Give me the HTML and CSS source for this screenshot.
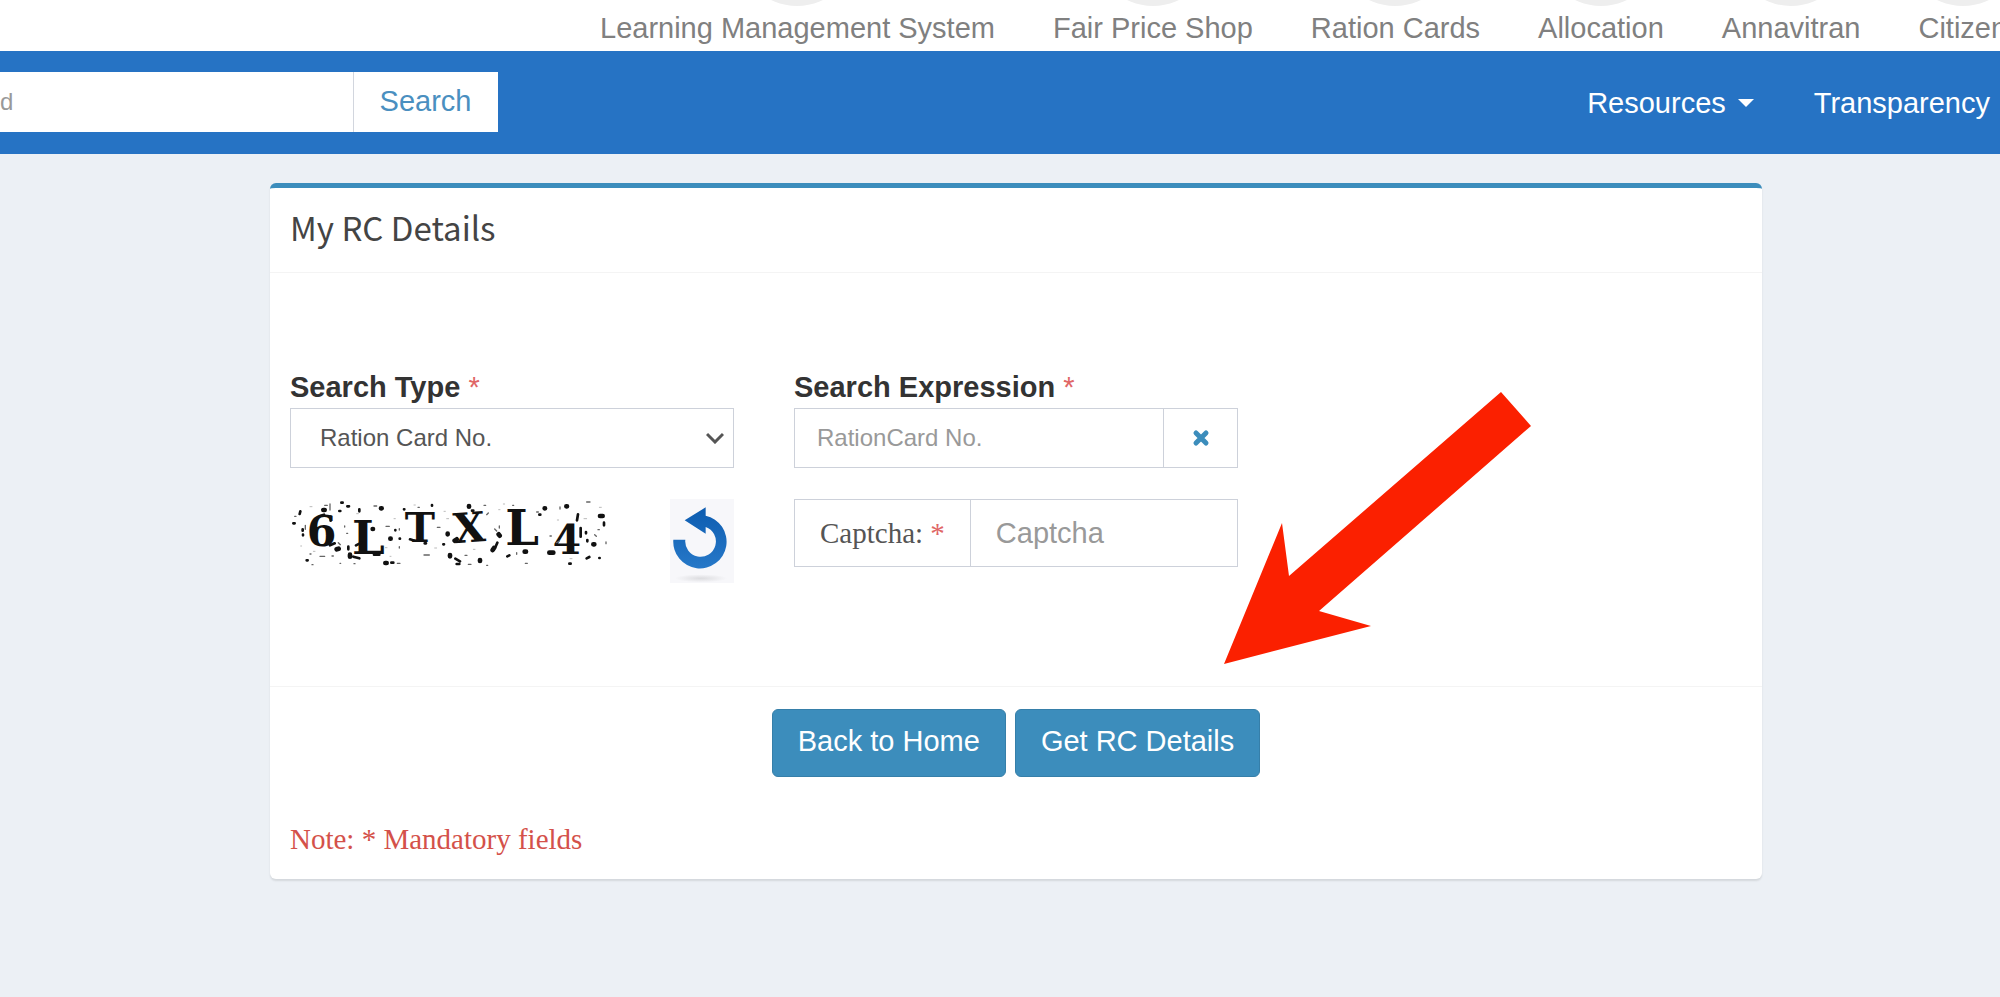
FILE: index.html
```
<!DOCTYPE html>
<html lang="en">
<head>
    <meta charset="UTF-8">
    <meta name="viewport" content="width=device-width, initial-scale=1.0">
    <title>My RC Details</title>
    <link rel="stylesheet" href="styles.css">
</head>
<body>
    <nav class="top-nav">
        <a href="#">Learning Management System</a>
        <a href="#">Fair Price Shop</a>
        <a href="#">Ration Cards</a>
        <a href="#">Allocation</a>
        <a href="#">Annavitran</a>
        <a href="#">Citizen</a>
    </nav>

    <header class="header">
        <form class="site-search">
            <input type="text" placeholder="d" aria-label="Search">
            <button type="button">Search</button>
        </form>
        <nav class="menu">
            <a href="#">Resources <span class="caret"></span></a>
            <a href="#">Transparency</a>
        </nav>
    </header>

    <main class="panel">
        <h1 class="panel-title">My RC Details</h1>

        <form>
            <div class="panel-body">
                <div class="form-group">
                    <label for="searchType">Search Type <span class="required">*</span></label>
                    <div class="select-box">
                        <select id="searchType">
                            <option>Ration Card No.</option>
                        </select>
                        <svg class="chevron" width="18" height="12" viewBox="0 0 18 12" fill="none" stroke="#555" stroke-width="3">
                            <path d="M1 2l8 8 8-8"/>
                        </svg>
                    </div>
                </div>

                <div class="form-group">
                    <label for="expression">Search Expression <span class="required">*</span></label>
                    <div class="input-group">
                        <input type="text" id="expression" placeholder="RationCard No.">
                        <button type="button" class="clear-btn" aria-label="Clear">
                            <svg width="18" height="18" viewBox="0 0 18 18" stroke="#3c8dbc" stroke-width="5" stroke-linecap="round">
                                <path d="M4 4l10 10M14 4L4 14"/>
                            </svg>
                        </button>
                    </div>
                </div>

                <div class="captcha-row">
                    <svg class="captcha" width="320" height="84" viewBox="60 39 960 252">
                        <g class="captcha-text">
                            <text x="110" y="179" font-size="128">6</text>
                            <text x="246" y="205" font-size="140">L</text>
                            <text x="404" y="168" font-size="122">T</text>
                            <text x="550" y="168" font-size="124" transform="rotate(-4 600 130)">X</text>
                            <text x="706" y="178" font-size="144">L</text>
                            <text x="848" y="205" font-size="122">4</text>
                        </g>
                        <!-- noise -->
                        <g fill="none" stroke="#111" stroke-linecap="round">
                            <path stroke-width="14" d="M889 61h2M824 67h1M597 60v2M333 67h2M160 72h4M990 90h8M361 158h1M533 143v2M686 145l3 4M540 207v4M346 231h4M630 222v3M970 175h3M308 129h1M764 197h4M240 206v6M200 190l6-2M668 192l4-6M838 200h12M560 160l-6 4"/>
                            <path stroke-width="8" d="M214 50h4M232 61h5M208 75h3M402 70h1M486 57v2M91 76l-2 8M70 112h4M98 130v4M99 146v2M376 132v1M389 158h1M520 175h2M712 211l6-3M988 216h1M950 217l8-4M898 233h4M110 223h3M235 182v8M556 218l14 8M568 234h-8M268 217l-18-5M924 85l-3 18M952 166v-4M948 142v-4M808 86h3M932 126v26M180 178l14-6M258 178l16-8M420 160l14 4M464 172h4M182 92v12M268 70v6M1002 118v-8M364 230h6M150 90l12-4M312 206h16M676 184l6-14M606 74h4"/>
                            <path stroke-width="4" stroke="#666" d="M180 54v18M164 58h8M150 211h14M462 207h16M642 58h5M950 48h10M870 63v6M74 91h4M186 210h4M205 170l6 6M348 121h10M388 128v4M388 182v4M510 124h-8M585 208h6M595 235h8M688 126v-6M728 58h3M800 78h5M840 150h4M984 131h4M1008 168v5M974 146l5 5M382 232h8M252 233h3M210 232h2M650 238h3M766 232h6M120 204h3M126 236h3M680 135l-6-6M740 205v-5M860 170l8-5M444 64h4M320 60h-8M106 118v12M230 142h3M224 120v3M650 86l5-5"/>
                            <path stroke-width="3" stroke="#bbb" d="M120 62h6M260 83h5M372 98h4M432 57h4M522 76h4M536 98h-6M686 71h4M700 54h4M862 102h4M950 98h-8M988 64h6M346 185h5M494 186h6M610 190h5M360 211h3M900 218h6M92 180h3M130 196h5"/>
                        </g>
                    </svg>
                    <button type="button" class="refresh-btn" aria-label="Refresh captcha">
                        <svg width="64" height="84" viewBox="1193 40 192 252">
                            <defs>
                                <linearGradient id="arrowFill" x1="0" y1="0" x2="0" y2="1">
                                    <stop offset="0" stop-color="#0d5cb0"/>
                                    <stop offset="1" stop-color="#2678c8"/>
                                </linearGradient>
                                <radialGradient id="shadow">
                                    <stop offset="0" stop-color="#dcdcdf"/>
                                    <stop offset="1" stop-color="#f7f7fa"/>
                                </radialGradient>
                            </defs>
                            <ellipse cx="1286" cy="278" rx="78" ry="12" fill="url(#shadow)"/>
                            <path fill="url(#arrowFill)" d="M1237 104L1300 65V90A80 80 0 1 1 1203 162H1239A46 46 0 1 0 1300 124V144Z"/>
                        </svg>
                    </button>
                </div>

                <div class="input-group captcha-group">
                    <label for="captcha">Captcha: <span class="required">*</span></label>
                    <input type="text" id="captcha" placeholder="Captcha">
                </div>
            </div>

            <div class="panel-footer">
                <div class="buttons">
                    <button type="button" class="btn">Back to Home</button>
                    <button type="button" class="btn">Get RC Details</button>
                </div>
                <p class="note">Note: * Mandatory fields</p>
            </div>
        </form>

        <svg class="pointer" width="308" height="273" viewBox="0 0 308 273">
            <path fill="#fb2000" d="M0 272L58 131L65 184L277 0L307 34L95 219L147 234Z"/>
        </svg>
    </main>
</body>
</html>
```
FILE: styles.css
```
* {
    box-sizing: border-box;
    margin: 0;
    padding: 0;
}
body {
    background-color: #ecf0f5;
    color: #333;
    font-family: "Liberation Sans", Arial, sans-serif;
    font-size: 29px;
    line-height: 40px;
    overflow-x: hidden;
}
a {
    text-decoration: none;
}
button, input, select {
    font: inherit;
}
button {
    cursor: pointer;
}

/* Top navigation */
.top-nav {
    display: flex;
    align-items: flex-end;
    gap: 58px;
    height: 51px;
    padding: 0 0 3px 30%;
    background: white;
    overflow: hidden;
}
.top-nav a {
    display: flex;
    flex-direction: column;
    align-items: center;
    flex-shrink: 0;
    color: #808080;
    white-space: nowrap;
}
.top-nav a::before {
    content: "";
    width: 118px;
    height: 118px;
    margin: 0 -20px 2px;
    border-radius: 50%;
    background: #eee;
}

/* Blue header */
.header {
    display: flex;
    justify-content: space-between;
    align-items: center;
    padding: 21px 10px 22px 0;
    background: #2673c4;
}
.site-search {
    display: flex;
    width: 25%;
    height: 60px;
}
.site-search input {
    flex: 1;
    min-width: 0;
    border: none;
    background: white;
    font-size: 24px;
}
.site-search button {
    padding: 0 26px 2px;
    border: none;
    border-left: 1px solid #d2d6de;
    background: white;
    color: #4a8fc0;
}
.menu {
    display: flex;
    gap: 60px;
    padding-top: 2px;
}
.menu a {
    display: flex;
    align-items: center;
    gap: 12px;
    color: white;
}
.caret {
    border-top: 8px solid white;
    border-left: 8px solid transparent;
    border-right: 8px solid transparent;
}

/* Panel */
.panel {
    position: relative;
    margin: 29px 11.9% 40px 13.5%;
    background: white;
    border-top: 5px solid #3c8dbc;
    border-radius: 6px;
    box-shadow: 0 2px 2px rgba(0,0,0,0.1);
}
.panel-title {
    padding: 19px 20px 25px;
    border-bottom: 1px solid #f4f4f4;
    color: #444;
    font-family: "Noto Sans CJK JP", "Noto Sans", sans-serif;
    font-size: 33px;
    font-weight: normal;
    line-height: 40px;
}
.panel-body {
    display: grid;
    grid-template-columns: repeat(3, 1fr);
    gap: 31px 60px;
    padding: 94px 20px 103px;
}
.form-group label {
    display: block;
    margin-bottom: 1px;
    font-weight: bold;
}
.required {
    color: #e06666;
    font-weight: normal;
}
.select-box {
    position: relative;
}
select, input {
    width: 100%;
    height: 60px;
    border: 1px solid #cdd1da;
    border-radius: 0;
    background: white;
    color: #555;
    font-size: 24px;
}
select {
    padding: 0 29px;
    appearance: none;
}
.chevron {
    position: absolute;
    right: 10px;
    top: 24px;
    pointer-events: none;
}
input::placeholder {
    color: #999;
    opacity: 1;
}
.input-group {
    display: flex;
}
.input-group input {
    flex: 1;
    min-width: 0;
    padding: 0 22px;
}
.clear-btn {
    display: flex;
    align-items: center;
    justify-content: center;
    width: 74px;
    border: 1px solid #cdd1da;
    border-left: none;
    background: white;
}
.captcha-row {
    grid-column: 1;
    display: flex;
    justify-content: space-between;
}
.captcha-text {
    font-family: "DejaVu Serif", serif;
    font-weight: bold;
    fill: #111;
}
.refresh-btn {
    height: 84px;
    border: none;
    background: #f7f7fa;
}
.captcha-group label,
.captcha-group input {
    height: 68px;
}
.captcha-group label {
    padding: 13px 25px;
    border: 1px solid #cdd1da;
    border-right: none;
    color: #555;
    font-family: "Liberation Serif", "Times New Roman", serif;
}
.captcha-group input {
    padding: 0 25px;
    font-size: 29px;
}

/* Footer */
.panel-footer {
    padding: 22px 20px 20px;
    border-top: 1px solid #f4f4f4;
}
.buttons {
    display: flex;
    justify-content: center;
    gap: 9px;
    margin-bottom: 42px;
}
.btn {
    padding: 11px 25px 15px;
    border: 1px solid #367fa9;
    border-radius: 6px;
    background: #3c8dbc;
    color: white;
}
.note {
    color: #d4514a;
    font-family: "Liberation Serif", "Times New Roman", serif;
}

/* Red arrow over the panel, points at the submit button */
.pointer {
    position: absolute;
    left: 954px;
    top: 204px;
    pointer-events: none;
}
```
